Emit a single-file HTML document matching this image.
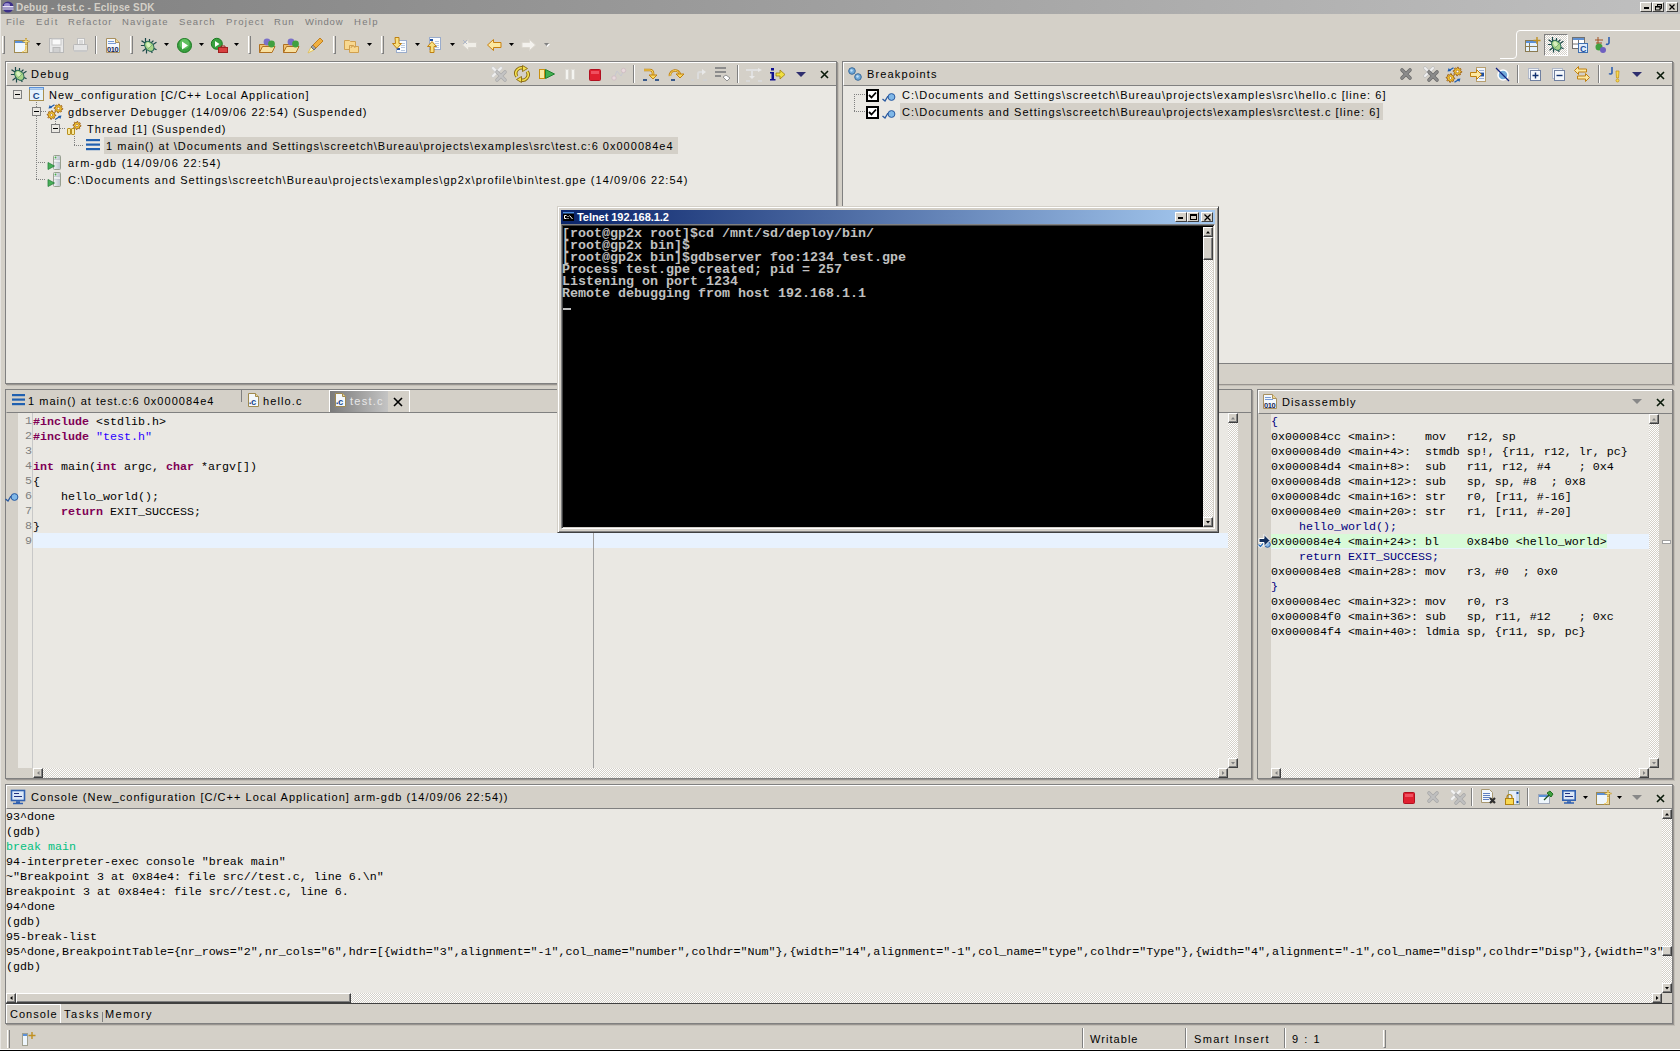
<!DOCTYPE html>
<html><head><meta charset="utf-8">
<style>
*{margin:0;padding:0;box-sizing:border-box}
html,body{width:1680px;height:1051px;overflow:hidden;background:#d4d0c8;position:relative;font-family:"Liberation Sans",sans-serif;font-size:11px;color:#000}
.a{position:absolute}
.t{position:absolute;white-space:pre;font-family:"Liberation Sans",sans-serif;font-size:11px;line-height:13px}
.m{position:absolute;white-space:pre;font-family:"Liberation Mono",monospace;font-size:11.667px;line-height:15px}
.tm{position:absolute;white-space:pre;font-family:"Liberation Mono",monospace;font-size:13.333px;font-weight:bold;line-height:12px;color:#c0c0c0}
.view{position:absolute;background:#eae8e3;border:1px solid #808080;box-shadow:1px 1px 0 #989490, 2px 2px 0 #c2beb6}
.hdr{position:absolute;left:0;right:0;top:0;height:24px;background:#d4d0c8;border-top:1px solid #fff;border-left:1px solid #fff;border-bottom:1px solid #808080}
.chk{background-color:#eae8e3;background-image:conic-gradient(#fff 25%,#d4d0c8 0 50%,#fff 0 75%,#d4d0c8 0);background-size:2px 2px}
.btn{position:absolute;width:10px;height:10px;background:#d4d0c8;border-top:1px solid #fff;border-left:1px solid #fff;border-right:1px solid #404040;border-bottom:1px solid #404040;box-shadow:inset -1px -1px 0 #808080}
.g{position:absolute;background:#d4d0c8}
svg{position:absolute;overflow:visible}
</style></head><body>

<!-- window edges -->
<div class="a" style="left:0;top:14px;width:1px;height:1037px;background:#e6e4e0"></div>
<div class="a" style="left:0;top:1049px;width:1680px;height:1px;background:#fff"></div>
<div class="a" style="left:0;top:1050px;width:1680px;height:1px;background:#000"></div>

<!-- title bar -->
<div class="a" style="left:1px;top:0;width:1679px;height:14px;background:linear-gradient(90deg,#808080,#c0c0c0)"></div>

<!-- perspective bar -->
<svg style="left:0;top:0" width="1680" height="62"><path d="M1500 58.5H1513Q1516.5 58.5 1516.5 55V34Q1516.5 30.5 1520 30.5H1680" fill="none" stroke="#fff"/></svg>

<!-- ===== Debug view ===== -->
<div class="view" style="left:5px;top:61px;width:832px;height:323px"><div class="hdr"></div></div>
<!-- selection row 4 -->
<div class="a" style="left:104px;top:137px;width:574px;height:17px;background:#d4d0c8"></div>

<!-- ===== Breakpoints view ===== -->
<div class="view" style="left:842px;top:61px;width:831px;height:323px"><div class="hdr"></div>
 <div class="a" style="left:0;top:301px;width:829px;height:21px;background:#d4d0c8;border-top:1px solid #808080"></div>
</div>
<div class="a" style="left:900px;top:103px;width:483px;height:17px;background:#d4d0c8"></div>

<!-- ===== Editor ===== -->
<div class="view" style="left:5px;top:389px;width:1247px;height:390px">
 <div class="hdr" style="height:23px;border-top-color:#d4d0c8;border-left-color:#d4d0c8"></div>
</div>
<!-- ruler and line-number column -->
<div class="g" style="left:6px;top:413px;width:12px;height:365px"></div>
<div class="g" style="left:18px;top:768px;width:15px;height:10px"></div>
<div class="a" style="left:32px;top:413px;width:1px;height:355px;background:#c8c8c8"></div>
<!-- current line -->
<div class="a" style="left:33px;top:533px;width:1195px;height:15px;background:#e8f2fe"></div>
<!-- print margin -->
<div class="a" style="left:593px;top:413px;width:1px;height:355px;background:#a0a0a0"></div>
<!-- scrollbars -->
<div class="a chk" style="left:1228px;top:413px;width:10px;height:355px"></div>
<div class="btn" style="left:1228px;top:413px"></div>
<div class="btn" style="left:1228px;top:758px"></div>
<div class="a chk" style="left:33px;top:768px;width:1195px;height:10px"></div>
<div class="btn" style="left:33px;top:768px"></div>
<div class="btn" style="left:1218px;top:768px"></div>
<div class="g" style="left:1228px;top:768px;width:10px;height:10px"></div>
<div class="g" style="left:1238px;top:413px;width:13px;height:365px"></div>
<!-- tab 3 selected -->
<div class="a" style="left:329px;top:390px;width:81px;height:22px;background:#d4d0c8;border-top:1px solid #fff;border-left:1px solid #fff;border-right:1px solid #fff"></div>
<div class="a" style="left:330px;top:391px;width:58px;height:21px;background:linear-gradient(90deg,#7a7a7a,#c4c4c4)"></div>
<div class="a" style="left:241px;top:390px;width:1px;height:12px;background:#808080"></div>

<!-- ===== Disassembly ===== -->
<div class="view" style="left:1257px;top:389px;width:416px;height:390px"><div class="hdr"></div></div>
<div class="g" style="left:1258px;top:414px;width:13px;height:364px"></div>
<div class="a" style="left:1271px;top:534px;width:336px;height:14px;background:#d8fad8"></div>
<div class="a" style="left:1271px;top:548px;width:378px;height:1px;background:#e8f2fe"></div>
<div class="a" style="left:1607px;top:534px;width:42px;height:15px;background:#e8f2fe"></div>
<div class="a chk" style="left:1649px;top:414px;width:10px;height:354px"></div>
<div class="btn" style="left:1649px;top:414px"></div>
<div class="btn" style="left:1649px;top:758px"></div>
<div class="a chk" style="left:1271px;top:768px;width:378px;height:10px"></div>
<div class="btn" style="left:1271px;top:768px"></div>
<div class="btn" style="left:1639px;top:768px"></div>
<div class="g" style="left:1649px;top:768px;width:10px;height:10px"></div>
<div class="g" style="left:1659px;top:414px;width:13px;height:364px"></div>
<div class="a" style="left:1662px;top:540px;width:9px;height:4px;background:#fff;border:1px solid #a0a0a0"></div>

<!-- ===== Console ===== -->
<div class="view" style="left:5px;top:784px;width:1668px;height:240px"><div class="hdr"></div></div>
<div class="a chk" style="left:1662px;top:809px;width:10px;height:184px"></div>
<div class="btn" style="left:1662px;top:809px"></div>
<div class="btn" style="left:1662px;top:946px"></div>
<div class="btn" style="left:1662px;top:983px"></div>
<div class="a chk" style="left:6px;top:993px;width:1656px;height:10px"></div>
<div class="btn" style="left:6px;top:993px"></div>
<div class="btn" style="left:16px;top:993px;width:335px"></div>
<div class="btn" style="left:1652px;top:993px"></div>
<div class="g" style="left:1662px;top:993px;width:10px;height:10px"></div>
<div class="g" style="left:6px;top:1003px;width:1666px;height:20px;border-top:1px solid #404040"></div>
<div class="a" style="left:6px;top:1004px;width:55px;height:19px;border-top:1px solid #fff;border-left:1px solid #fff;border-right:1px solid #fff"></div>
<div class="a" style="left:102px;top:1012px;width:1px;height:10px;background:#808080"></div>

<!-- ===== status bar ===== -->
<div class="a" style="left:7px;top:1030px;width:3px;height:18px;border-left:1px solid #fff;border-right:1px solid #808080"></div>
<div class="a" style="left:1082px;top:1028px;width:2px;height:20px;border-left:1px solid #808080;border-right:1px solid #fff"></div>
<div class="a" style="left:1185px;top:1028px;width:2px;height:20px;border-left:1px solid #808080;border-right:1px solid #fff"></div>
<div class="a" style="left:1284px;top:1028px;width:2px;height:20px;border-left:1px solid #808080;border-right:1px solid #fff"></div>
<div class="a" style="left:1383px;top:1030px;width:3px;height:18px;border-left:1px solid #fff;border-right:1px solid #808080;border-bottom:1px solid #808080"></div>

<div class="t" style="left:16px;top:2px;letter-spacing:0.170px;color:#d4d0c8;font-weight:bold;font-size:10px;line-height:12px;">Debug - test.c - Eclipse SDK</div>
<div class="t" style="left:6px;top:16px;letter-spacing:1.062px;color:#7c7c7c;font-weight:normal;font-size:9.5px;line-height:11px;">File</div>
<div class="t" style="left:36px;top:16px;letter-spacing:1.708px;color:#7c7c7c;font-weight:normal;font-size:9.5px;line-height:11px;">Edit</div>
<div class="t" style="left:68px;top:16px;letter-spacing:1.085px;color:#7c7c7c;font-weight:normal;font-size:9.5px;line-height:11px;">Refactor</div>
<div class="t" style="left:122px;top:16px;letter-spacing:1.143px;color:#7c7c7c;font-weight:normal;font-size:9.5px;line-height:11px;">Navigate</div>
<div class="t" style="left:179px;top:16px;letter-spacing:1.078px;color:#7c7c7c;font-weight:normal;font-size:9.5px;line-height:11px;">Search</div>
<div class="t" style="left:226px;top:16px;letter-spacing:1.320px;color:#7c7c7c;font-weight:normal;font-size:9.5px;line-height:11px;">Project</div>
<div class="t" style="left:274px;top:16px;letter-spacing:1.031px;color:#7c7c7c;font-weight:normal;font-size:9.5px;line-height:11px;">Run</div>
<div class="t" style="left:305px;top:16px;letter-spacing:0.741px;color:#7c7c7c;font-weight:normal;font-size:9.5px;line-height:11px;">Window</div>
<div class="t" style="left:354px;top:16px;letter-spacing:1.318px;color:#7c7c7c;font-weight:normal;font-size:9.5px;line-height:11px;">Help</div>
<div class="t" style="left:31px;top:68px;letter-spacing:1.270px;color:#000;font-weight:normal;">Debug</div>
<div class="t" style="left:49px;top:89px;letter-spacing:0.996px;color:#000;font-weight:normal;">New_configuration [C/C++ Local Application]</div>
<div class="t" style="left:68px;top:106px;letter-spacing:1.052px;color:#000;font-weight:normal;">gdbserver Debugger (14/09/06 22:54) (Suspended)</div>
<div class="t" style="left:87px;top:123px;letter-spacing:1.062px;color:#000;font-weight:normal;">Thread [1] (Suspended)</div>
<div class="t" style="left:106px;top:140px;letter-spacing:1.014px;color:#000;font-weight:normal;">1 main() at \Documents and Settings\screetch\Bureau\projects\examples\src\test.c:6 0x000084e4</div>
<div class="t" style="left:68px;top:157px;letter-spacing:1.207px;color:#000;font-weight:normal;">arm-gdb (14/09/06 22:54)</div>
<div class="t" style="left:68px;top:174px;letter-spacing:1.060px;color:#000;font-weight:normal;">C:\Documents and Settings\screetch\Bureau\projects\examples\gp2x\profile\bin\test.gpe (14/09/06 22:54)</div>
<div class="t" style="left:867px;top:68px;letter-spacing:1.141px;color:#000;font-weight:normal;">Breakpoints</div>
<div class="t" style="left:902px;top:89px;letter-spacing:1.046px;color:#000;font-weight:normal;">C:\Documents and Settings\screetch\Bureau\projects\examples\src\hello.c [line: 6]</div>
<div class="t" style="left:902px;top:106px;letter-spacing:1.052px;color:#000;font-weight:normal;">C:\Documents and Settings\screetch\Bureau\projects\examples\src\test.c [line: 6]</div>
<div class="t" style="left:28px;top:395px;letter-spacing:1.026px;color:#000;font-weight:normal;">1 main() at test.c:6 0x000084e4</div>
<div class="t" style="left:263px;top:395px;letter-spacing:1.117px;color:#000;font-weight:normal;">hello.c</div>
<div class="t" style="left:350px;top:395px;letter-spacing:1.241px;color:#e8e8e8;font-weight:normal;">test.c</div>
<div class="t" style="left:1282px;top:396px;letter-spacing:1.114px;color:#000;font-weight:normal;">Disassembly</div>
<div class="t" style="left:31px;top:791px;letter-spacing:1.042px;color:#000;font-weight:normal;">Console (New_configuration [C/C++ Local Application] arm-gdb (14/09/06 22:54))</div>
<div class="t" style="left:10px;top:1008px;letter-spacing:1.023px;color:#000;font-weight:normal;">Console</div>
<div class="t" style="left:64px;top:1008px;letter-spacing:1.594px;color:#000;font-weight:normal;">Tasks</div>
<div class="t" style="left:105px;top:1008px;letter-spacing:1.353px;color:#000;font-weight:normal;">Memory</div>
<div class="t" style="left:1090px;top:1033px;letter-spacing:1.049px;color:#000;font-weight:normal;">Writable</div>
<div class="t" style="left:1194px;top:1033px;letter-spacing:1.327px;color:#000;font-weight:normal;">Smart Insert</div>
<div class="t" style="left:1292px;top:1033px;letter-spacing:1.523px;color:#000;font-weight:normal;">9 : 1</div>
<div class="m" style="left:33px;top:415px"><span style="color:#7f0055;font-weight:bold;">#include</span><span style="color:#000;"> &lt;stdlib.h&gt;</span></div>
<div class="m" style="left:25px;top:414px;color:#808080">1</div>
<div class="m" style="left:33px;top:430px"><span style="color:#7f0055;font-weight:bold;">#include</span><span style="color:#000;"> </span><span style="color:#2a00ff;">"test.h"</span></div>
<div class="m" style="left:25px;top:429px;color:#808080">2</div>
<div class="m" style="left:33px;top:445px"></div>
<div class="m" style="left:25px;top:444px;color:#808080">3</div>
<div class="m" style="left:33px;top:460px"><span style="color:#7f0055;font-weight:bold;">int</span><span style="color:#000;"> main(</span><span style="color:#7f0055;font-weight:bold;">int</span><span style="color:#000;"> argc, </span><span style="color:#7f0055;font-weight:bold;">char</span><span style="color:#000;"> *argv[])</span></div>
<div class="m" style="left:25px;top:459px;color:#808080">4</div>
<div class="m" style="left:33px;top:475px"><span style="color:#000;">{</span></div>
<div class="m" style="left:25px;top:474px;color:#808080">5</div>
<div class="m" style="left:33px;top:490px"><span style="color:#000;">    hello_world();</span></div>
<div class="m" style="left:25px;top:489px;color:#808080">6</div>
<div class="m" style="left:33px;top:505px"><span style="color:#000;">    </span><span style="color:#7f0055;font-weight:bold;">return</span><span style="color:#000;"> EXIT_SUCCESS;</span></div>
<div class="m" style="left:25px;top:504px;color:#808080">7</div>
<div class="m" style="left:33px;top:520px"><span style="color:#000;">}</span></div>
<div class="m" style="left:25px;top:519px;color:#808080">8</div>
<div class="m" style="left:33px;top:535px"></div>
<div class="m" style="left:25px;top:534px;color:#808080">9</div>
<div class="m" style="left:1271px;top:415px"><span style="color:#00007f">{</span></div>
<div class="m" style="left:1271px;top:430px"><span style="color:#000">0x000084cc &lt;main&gt;:    mov   r12, sp</span></div>
<div class="m" style="left:1271px;top:445px"><span style="color:#000">0x000084d0 &lt;main+4&gt;:  stmdb sp!, {r11, r12, lr, pc}</span></div>
<div class="m" style="left:1271px;top:460px"><span style="color:#000">0x000084d4 &lt;main+8&gt;:  sub   r11, r12, #4    ; 0x4</span></div>
<div class="m" style="left:1271px;top:475px"><span style="color:#000">0x000084d8 &lt;main+12&gt;: sub   sp, sp, #8  ; 0x8</span></div>
<div class="m" style="left:1271px;top:490px"><span style="color:#000">0x000084dc &lt;main+16&gt;: str   r0, [r11, #-16]</span></div>
<div class="m" style="left:1271px;top:505px"><span style="color:#000">0x000084e0 &lt;main+20&gt;: str   r1, [r11, #-20]</span></div>
<div class="m" style="left:1271px;top:520px"><span style="color:#00007f">    hello_world();</span></div>
<div class="m" style="left:1271px;top:535px"><span style="color:#000">0x000084e4 &lt;main+24&gt;: bl    0x84b0 &lt;hello_world&gt;</span></div>
<div class="m" style="left:1271px;top:550px"><span style="color:#00007f">    return EXIT_SUCCESS;</span></div>
<div class="m" style="left:1271px;top:565px"><span style="color:#000">0x000084e8 &lt;main+28&gt;: mov   r3, #0  ; 0x0</span></div>
<div class="m" style="left:1271px;top:580px"><span style="color:#00007f">}</span></div>
<div class="m" style="left:1271px;top:595px"><span style="color:#000">0x000084ec &lt;main+32&gt;: mov   r0, r3</span></div>
<div class="m" style="left:1271px;top:610px"><span style="color:#000">0x000084f0 &lt;main+36&gt;: sub   sp, r11, #12    ; 0xc</span></div>
<div class="m" style="left:1271px;top:625px"><span style="color:#000">0x000084f4 &lt;main+40&gt;: ldmia sp, {r11, sp, pc}</span></div>
<div class="m" style="left:6px;top:810px;color:#000">93^done</div>
<div class="m" style="left:6px;top:825px;color:#000">(gdb)</div>
<div class="m" style="left:6px;top:840px;color:#00c080">break main</div>
<div class="m" style="left:6px;top:855px;color:#000">94-interpreter-exec console "break main"</div>
<div class="m" style="left:6px;top:870px;color:#000">~"Breakpoint 3 at 0x84e4: file src//test.c, line 6.\n"</div>
<div class="m" style="left:6px;top:885px;color:#000">Breakpoint 3 at 0x84e4: file src//test.c, line 6.</div>
<div class="m" style="left:6px;top:900px;color:#000">94^done</div>
<div class="m" style="left:6px;top:915px;color:#000">(gdb)</div>
<div class="m" style="left:6px;top:930px;color:#000">95-break-list</div>
<div class="m" style="left:6px;top:945px;color:#000">95^done,BreakpointTable={nr_rows="2",nr_cols="6",hdr=[{width="3",alignment="-1",col_name="number",colhdr="Num"},{width="14",alignment="-1",col_name="type",colhdr="Type"},{width="4",alignment="-1",col_name="disp",colhdr="Disp"},{width="3"</div>
<div class="m" style="left:6px;top:960px;color:#000">(gdb)</div>

<!-- ===== Telnet window ===== -->
<div class="a" style="left:557px;top:206px;width:662px;height:327px;background:#d4d0c8;border-top:1px solid #d4d0c8;border-left:1px solid #d4d0c8;border-right:1px solid #404040;border-bottom:1px solid #404040;box-shadow:inset 1px 1px 0 #fff, inset -1px -1px 0 #808080"></div>
<div class="a" style="left:561px;top:210px;width:654px;height:14px;background:linear-gradient(90deg,#0a246a,#a6caf0)"></div>
<div class="a" style="left:561px;top:224px;width:654px;height:305px;background:#000;border-top:1px solid #808080;border-left:1px solid #808080;border-right:1px solid #fff;border-bottom:1px solid #fff;box-shadow:inset 1px 1px 0 #404040, inset -1px -1px 0 #d4d0c8"></div>
<div class="a chk" style="left:1203px;top:227px;width:10px;height:300px"></div>
<div class="btn" style="left:1203px;top:227px"></div>
<div class="btn" style="left:1203px;top:237px;height:23px"></div>
<div class="btn" style="left:1203px;top:517px"></div>
<div class="a" style="left:563px;top:308px;width:8px;height:2px;background:#c0c0c0"></div>
<div class="t" style="left:577px;top:211px;color:#fff;font-weight:bold;letter-spacing:-0.05px">Telnet 192.168.1.2</div>
<div class="tm" style="left:562px;top:228px">[root@gp2x root]$cd /mnt/sd/deploy/bin/</div>
<div class="tm" style="left:562px;top:240px">[root@gp2x bin]$</div>
<div class="tm" style="left:562px;top:252px">[root@gp2x bin]$gdbserver foo:1234 test.gpe</div>
<div class="tm" style="left:562px;top:264px">Process test.gpe created; pid = 257</div>
<div class="tm" style="left:562px;top:276px">Listening on port 1234</div>
<div class="tm" style="left:562px;top:288px">Remote debugging from host 192.168.1.1</div>

<svg style="left:2px;top:1px" width="12" height="12" viewBox="0 0 12 12"><ellipse cx="6" cy="6" rx="5.5" ry="5.5" fill="#3c2f8a"/><ellipse cx="5" cy="4" rx="3" ry="2" fill="#9a8ed0"/><rect x="0.5" y="5" width="11" height="1.6" fill="#e8e4f4"/><rect x="0.5" y="7.4" width="11" height="1.2" fill="#e8e4f4"/></svg>
<div class="a" style="left:1640px;top:2px;width:12px;height:10px;background:#d4d0c8;border-top:1px solid #fff;border-left:1px solid #fff;border-right:1px solid #404040;border-bottom:1px solid #404040"></div>
<div class="a" style="left:1652px;top:2px;width:12px;height:10px;background:#d4d0c8;border-top:1px solid #fff;border-left:1px solid #fff;border-right:1px solid #404040;border-bottom:1px solid #404040"></div>
<div class="a" style="left:1666px;top:2px;width:12px;height:10px;background:#d4d0c8;border-top:1px solid #fff;border-left:1px solid #fff;border-right:1px solid #404040;border-bottom:1px solid #404040"></div>
<svg style="left:1644px;top:7px" width="6" height="3" viewBox="0 0 6 3"><rect x="0" y="0" width="5" height="2" fill="#000"/></svg>
<svg style="left:1655px;top:4px" width="8" height="8" viewBox="0 0 8 8"><path d="M2.5 2V0.5h4v4H5" fill="none" stroke="#000"/><rect x="0.5" y="2.5" width="4.5" height="3.5" fill="none" stroke="#000"/><rect x="0" y="2" width="5.5" height="1.5" fill="#000"/><rect x="2" y="0" width="5" height="1.2" fill="#000"/></svg>
<svg style="left:1669px;top:4px" width="7" height="7" viewBox="0 0 7 7"><path d="M0.5 0.5l5 5M5.5 0.5l-5 5" stroke="#000" stroke-width="1.2"/></svg>
<div class="a" style="left:2px;top:36px;width:3px;height:18px;border-left:1px solid #fff;border-right:1px solid #808080;border-bottom:1px solid #808080"></div>
<svg style="left:14px;top:38px" width="16" height="16" viewBox="0 0 16 16"><rect x="0.5" y="2.5" width="13" height="12" fill="#eef6fc" stroke="#a08a50"/><rect x="1" y="3" width="12" height="2" fill="#5a90d8"/><path d="M12 1.5v13M8 14c3 0 4-3 4-6" stroke="#f0c040" fill="none"/><path d="M12 0v7M8.5 3.5h7" stroke="#c09020" stroke-width="1.4"/><path d="M12 1v5M9.5 3.5h5" stroke="#fff0a0" stroke-width="0.8"/></svg>
<svg style="left:36px;top:43px" width="5" height="4" viewBox="0 0 5 4"><path d="M0 0h5l-2.5 3z" fill="#000"/></svg>
<svg style="left:49px;top:38px" width="16" height="16" viewBox="0 0 16 16"><rect x="0.5" y="0.5" width="14" height="14" fill="#e8e8e8" stroke="#b8b8b8"/><rect x="3" y="1" width="9" height="6" fill="#fafafa" stroke="#c8c8c8"/><rect x="4" y="9.5" width="7" height="5" fill="#d0d0d0" stroke="#b8b8b8"/></svg>
<svg style="left:73px;top:38px" width="16" height="16" viewBox="0 0 16 16"><rect x="4.5" y="0.5" width="7" height="6" fill="#f4f4f4" stroke="#c0c0c0"/><rect x="0.5" y="6.5" width="14" height="6" rx="1" fill="#e4e4e4" stroke="#b8b8b8"/><rect x="1" y="12" width="13" height="2" fill="#c8c8c8"/><path d="M6 3h4M6 5h4" stroke="#c0c0c0"/></svg>
<div class="a" style="left:95px;top:36px;width:2px;height:18px;border-left:1px solid #808080;border-right:1px solid #fff"></div>
<svg style="left:106px;top:38px" width="16" height="16" viewBox="0 0 16 16"><path d="M0.5 0.5h9l4 4v10h-13z" fill="#f4f8fc" stroke="#a89060"/><path d="M9.5 0.5v4h4" fill="#f0d890" stroke="#a89060"/><path d="M2 3.5h6M2 5.5h8" stroke="#6a90d0" stroke-width="0.9"/><text x="1" y="13.5" font-family="Liberation Sans" font-weight="bold" font-size="7.5" fill="#14285a" letter-spacing="-0.4">010</text></svg>
<div class="a" style="left:130px;top:36px;width:3px;height:18px;border-left:1px solid #fff;border-right:1px solid #808080;border-bottom:1px solid #808080"></div>
<svg style="left:141px;top:38px" width="16" height="16" viewBox="0 0 16 16"><g stroke="#1a4848" stroke-width="1.2" fill="none" stroke-linecap="square"><path d="M4.5 0.5v4M1 3l3 2M0.5 7.5h3.5M2 13l3-2.5M5.5 15v-3M8.5 1.5v2.5M12 3l-2 2M15 4.5l-3 2M15 11.5l-3-1.5M11 14.5l-1.5-2"/></g><ellipse cx="8.3" cy="8.3" rx="4" ry="5.6" transform="rotate(-40 8.3 8.3)" fill="#a8d488" stroke="#2a6a58"/><ellipse cx="7.5" cy="7" rx="1.8" ry="2.6" transform="rotate(-40 7.5 7)" fill="#d8f0c0"/><path d="M6 12l6-6" stroke="#70a870" stroke-width="0.8"/></svg>
<svg style="left:164px;top:43px" width="5" height="4" viewBox="0 0 5 4"><path d="M0 0h5l-2.5 3z" fill="#000"/></svg>
<svg style="left:177px;top:38px" width="16" height="16" viewBox="0 0 16 16"><circle cx="7.5" cy="7.5" r="7" fill="#3aa040" stroke="#1a7a20"/><circle cx="7.5" cy="6" r="5" fill="#60c060"/><path d="M5 3.5v8l6-4z" fill="#fff"/></svg>
<svg style="left:199px;top:43px" width="5" height="4" viewBox="0 0 5 4"><path d="M0 0h5l-2.5 3z" fill="#000"/></svg>
<svg style="left:211px;top:38px" width="17" height="16" viewBox="0 0 17 16"><circle cx="5.8" cy="5.8" r="5.5" fill="#3aa040" stroke="#1a7a20"/><path d="M4 3v6l4.5-3z" fill="#fff"/><rect x="7.5" y="9.5" width="9" height="5" fill="#d84040" stroke="#a02020"/><path d="M10 9.5v-1.5h4v1.5" fill="none" stroke="#a02020"/></svg>
<svg style="left:234px;top:43px" width="5" height="4" viewBox="0 0 5 4"><path d="M0 0h5l-2.5 3z" fill="#000"/></svg>
<div class="a" style="left:248px;top:36px;width:3px;height:18px;border-left:1px solid #fff;border-right:1px solid #808080;border-bottom:1px solid #808080"></div>
<svg style="left:259px;top:38px" width="17" height="16" viewBox="0 0 17 16"><path d="M0.5 6.5h10l1.5 1.5v6.5h-11.5z" fill="#f0c070" stroke="#b07020"/><path d="M0.5 14.5l3-6h12.5l-3 6z" fill="#f8e0a0" stroke="#b07020"/><circle cx="8" cy="4" r="3.4" fill="#7a70c8"/><circle cx="12.5" cy="6" r="3.4" fill="#40a040"/></svg>
<svg style="left:283px;top:38px" width="17" height="16" viewBox="0 0 17 16"><path d="M0.5 6.5h10l1.5 1.5v6.5h-11.5z" fill="#f0c070" stroke="#b07020"/><path d="M0.5 14.5l3-6h12.5l-3 6z" fill="#f8e0a0" stroke="#b07020"/><circle cx="8" cy="4" r="3.4" fill="#7a70c8"/><circle cx="12.5" cy="6" r="3.4" fill="#40a040"/></svg>
<svg style="left:307px;top:38px" width="17" height="16" viewBox="0 0 17 16"><path d="M1 15l3-6 3 3z" fill="#fff8c0" stroke="#e0c060"/><path d="M4 9l2-2 3 3-2 2z" fill="#a0a0a0" stroke="#707070"/><path d="M6 7l7-7 3 3-7 7z" fill="#f0b040" stroke="#c08020"/></svg>
<div class="a" style="left:333px;top:36px;width:3px;height:18px;border-left:1px solid #fff;border-right:1px solid #808080;border-bottom:1px solid #808080"></div>
<svg style="left:344px;top:38px" width="16" height="16" viewBox="0 0 16 16"><path d="M0.5 2.5h5l1 1h5v8h-11z" fill="#f8d890" stroke="#d0a050"/><path d="M5.5 7.5h4l1 1h4v6h-9z" fill="#f8d890" stroke="#d0a050"/><path d="M7 10a2 2 0 0 1 4 0" stroke="#d0a050" fill="none"/></svg>
<svg style="left:367px;top:43px" width="5" height="4" viewBox="0 0 5 4"><path d="M0 0h5l-2.5 3z" fill="#000"/></svg>
<div class="a" style="left:381px;top:36px;width:3px;height:18px;border-left:1px solid #fff;border-right:1px solid #808080;border-bottom:1px solid #808080"></div>
<svg style="left:392px;top:37px" width="16" height="16" viewBox="0 0 16 16"><rect x="4.5" y="3.5" width="10" height="12" fill="#fbfdff" stroke="#9aaccc"/><path d="M9 6.5h4M9 8.5h4M9 10.5h4M9 13.5h4" stroke="#b8c8e0"/><rect x="5" y="11" width="3" height="2" fill="#2050a0"/><path d="M3 0.5h4v6h2.5l-4.5 5-4.5-5h3z" fill="#f8e080" stroke="#c08010"/></svg>
<svg style="left:415px;top:43px" width="5" height="4" viewBox="0 0 5 4"><path d="M0 0h5l-2.5 3z" fill="#000"/></svg>
<svg style="left:427px;top:37px" width="16" height="16" viewBox="0 0 16 16"><rect x="2.5" y="0.5" width="11" height="12" fill="#fbfdff" stroke="#9aaccc"/><path d="M8 4.5h4M8 6.5h4M8 8.5h4M8 10.5h4" stroke="#b8c8e0"/><rect x="3" y="2" width="3" height="2" fill="#2050a0"/><path d="M3 15.5h4v-6h2.5l-4.5-5-4.5 5h3z" fill="#f8e080" stroke="#c08010"/></svg>
<svg style="left:450px;top:43px" width="5" height="4" viewBox="0 0 5 4"><path d="M0 0h5l-2.5 3z" fill="#000"/></svg>
<svg style="left:462px;top:39px" width="16" height="13" viewBox="0 0 16 13"><path d="M0.5 6l6-5.5v3h8v5h-8v3z" fill="#f0eee8" stroke="#d8d4cc"/><path d="M1 1l4 4M5 1l-4 4" stroke="#b0b8c8"/></svg>
<svg style="left:487px;top:39px" width="16" height="13" viewBox="0 0 16 13"><path d="M0.5 6l6-5.5v3h7.5v5h-7.5v3z" fill="#fce8a0" stroke="#c88010"/></svg>
<svg style="left:509px;top:43px" width="5" height="4" viewBox="0 0 5 4"><path d="M0 0h5l-2.5 3z" fill="#000"/></svg>
<svg style="left:522px;top:39px" width="16" height="13" viewBox="0 0 16 13"><path d="M13.5 6l-6-5.5v3h-7.5v5h7.5v3z" fill="#f4f2ee" stroke="#dcd8d0"/></svg>
<svg style="left:544px;top:43px" width="7" height="5" viewBox="0 0 7 5"><path d="M1 1h5l-2.5 3z" fill="#fff"/><path d="M0 0h5l-2.5 3z" fill="#808080"/></svg>
<svg style="left:1525px;top:37px" width="16" height="16" viewBox="0 0 16 16"><rect x="0.5" y="3.5" width="12" height="11" fill="#e4f2fc" stroke="#8a7a50"/><rect x="1" y="4" width="11" height="2" fill="#5a90d8"/><path d="M4.5 6v8M1 9.5h11" stroke="#8a7a50"/><path d="M12 0v7M8.5 3.5h7" stroke="#c09020" stroke-width="1.4"/></svg>
<div class="a chk" style="left:1544px;top:34px;width:24px;height:22px;border-top:1px solid #808080;border-left:1px solid #808080;border-right:1px solid #fff;border-bottom:1px solid #fff"></div>
<svg style="left:1548px;top:37px" width="16" height="16" viewBox="0 0 16 16"><g stroke="#1a4848" stroke-width="1.2" fill="none" stroke-linecap="square"><path d="M4.5 0.5v4M1 3l3 2M0.5 7.5h3.5M2 13l3-2.5M5.5 15v-3M8.5 1.5v2.5M12 3l-2 2M15 4.5l-3 2M15 11.5l-3-1.5M11 14.5l-1.5-2"/></g><ellipse cx="8.3" cy="8.3" rx="4" ry="5.6" transform="rotate(-40 8.3 8.3)" fill="#a8d488" stroke="#2a6a58"/><ellipse cx="7.5" cy="7" rx="1.8" ry="2.6" transform="rotate(-40 7.5 7)" fill="#d8f0c0"/><path d="M6 12l6-6" stroke="#70a870" stroke-width="0.8"/></svg>
<svg style="left:1572px;top:37px" width="16" height="16" viewBox="0 0 16 16"><rect x="0.5" y="0.5" width="12" height="11" fill="#fff" stroke="#707070"/><rect x="1" y="1" width="11" height="2" fill="#6090d0"/><path d="M6.5 3v8M1 7h11" stroke="#707070"/><rect x="6.5" y="6.5" width="9" height="9" fill="#e0ecfa" stroke="#4070b0"/><text x="8" y="14.5" font-family="Liberation Sans" font-weight="bold" font-size="9" fill="#2050a0">C</text></svg>
<svg style="left:1595px;top:37px" width="17" height="16" viewBox="0 0 17 16"><path d="M3 0v7M0 3h8M1 6h6" stroke="#a05020" fill="none"/><circle cx="4" cy="10" r="3.5" fill="#40a040"/><circle cx="8" cy="13" r="3" fill="#7060c0"/><path d="M14 0v6a2 2 0 0 1-3 1" stroke="#3060b0" stroke-width="1.6" fill="none"/></svg>
<svg style="left:11px;top:67px" width="16" height="16" viewBox="0 0 16 16"><g stroke="#1a4848" stroke-width="1.2" fill="none" stroke-linecap="square"><path d="M4.5 0.5v4M1 3l3 2M0.5 7.5h3.5M2 13l3-2.5M5.5 15v-3M8.5 1.5v2.5M12 3l-2 2M15 4.5l-3 2M15 11.5l-3-1.5M11 14.5l-1.5-2"/></g><ellipse cx="8.3" cy="8.3" rx="4" ry="5.6" transform="rotate(-40 8.3 8.3)" fill="#a8d488" stroke="#2a6a58"/><ellipse cx="7.5" cy="7" rx="1.8" ry="2.6" transform="rotate(-40 7.5 7)" fill="#d8f0c0"/><path d="M6 12l6-6" stroke="#70a870" stroke-width="0.8"/></svg>
<svg style="left:491px;top:66px" width="16" height="16" viewBox="0 0 16 16"><path d="M2 2l8 8M10 2l-8 8" stroke="#d0d0d0" stroke-width="3.6" stroke-linecap="round"/><path d="M2 2l8 8M10 2l-8 8" stroke="#f0f0f0" stroke-width="2" stroke-linecap="round"/><g transform="translate(4,4)"><path d="M2 2l8 8M10 2l-8 8" stroke="#acacac" stroke-width="3.6" stroke-linecap="round"/><path d="M2 2l8 8M10 2l-8 8" stroke="#c4c4c4" stroke-width="2" stroke-linecap="round"/></g></svg>
<svg style="left:514px;top:66px" width="17" height="17" viewBox="0 0 17 17"><g fill="none" stroke-linecap="butt"><path d="M2.8 10.5A5.5 5.5 0 0 1 10 2.6" stroke="#8a6a10" stroke-width="3.4"/><path d="M13.2 5.5A5.5 5.5 0 0 1 6 13.4" stroke="#8a6a10" stroke-width="3.4"/><path d="M2.8 10.5A5.5 5.5 0 0 1 10 2.6" stroke="#f4e050" stroke-width="1.6"/><path d="M13.2 5.5A5.5 5.5 0 0 1 6 13.4" stroke="#f4e050" stroke-width="1.6"/></g><path d="M8.5 -0.5l5 3-5 3z" fill="#f4e050" stroke="#8a6a10" stroke-width="0.9"/><path d="M7.5 16.5l-5-3 5-3z" fill="#f4e050" stroke="#8a6a10" stroke-width="0.9"/></svg>
<svg style="left:539px;top:69px" width="16" height="11" viewBox="0 0 16 11"><rect x="0.5" y="0.5" width="5" height="9" fill="#f8e8a0" stroke="#c89010"/><path d="M6.5 0.5v9l9-4.5z" fill="#40b050" stroke="#208030"/></svg>
<svg style="left:565px;top:69px" width="11" height="12" viewBox="0 0 11 12"><rect x="0.5" y="0.5" width="3" height="10" fill="#f4f4f0" stroke="#dcdad4"/><rect x="6.5" y="0.5" width="3" height="10" fill="#f4f4f0" stroke="#dcdad4"/></svg>
<svg style="left:589px;top:69px" width="12" height="12" viewBox="0 0 12 12"><rect x="0.5" y="0.5" width="11" height="11" rx="1" fill="#e02030" stroke="#b01020"/><rect x="2" y="2" width="8" height="3" fill="#f05060"/></svg>
<svg style="left:611px;top:68px" width="16" height="13" viewBox="0 0 16 13"><path d="M3 10L6 3l4 5 3-6" stroke="#c8c8d0" fill="none"/><circle cx="3" cy="10" r="2.2" fill="#e8d8dc" stroke="#d0c0c4"/><circle cx="12.5" cy="2.5" r="2.2" fill="#e8d8dc" stroke="#d0c0c4"/></svg>
<div class="a" style="left:633px;top:65px;width:2px;height:18px;border-left:1px solid #808080;border-right:1px solid #fff"></div>
<svg style="left:643px;top:68px" width="16" height="14" viewBox="0 0 16 14"><path d="M1 2h6a3 3 0 0 1 3 3v3" stroke="#c08010" stroke-width="2.6" fill="none"/><path d="M1 2h6a3 3 0 0 1 3 3v3" stroke="#f8d860" stroke-width="1" fill="none"/><path d="M6 7h8l-4 4z" fill="#f8d860" stroke="#c08010"/><rect x="0" y="11" width="4" height="2" fill="#3a5a8a"/><rect x="12" y="11" width="4" height="2" fill="#3a5a8a"/></svg>
<svg style="left:667px;top:68px" width="17" height="14" viewBox="0 0 17 14"><path d="M3 8a5 5 0 0 1 10 -1" stroke="#c08010" stroke-width="2.6" fill="none"/><path d="M3 8a5 5 0 0 1 10 -1" stroke="#f8d860" stroke-width="1" fill="none"/><path d="M9 6h8l-4 4z" fill="#f8d860" stroke="#c08010"/><rect x="4" y="11" width="4" height="2" fill="#3a5a8a"/></svg>
<svg style="left:691px;top:68px" width="16" height="14" viewBox="0 0 16 14"><path d="M7 11V6a2 2 0 0 1 2-2h3" stroke="#dcdcdc" stroke-width="2" fill="none"/><path d="M11 1l4 3-4 3z" fill="#e8e8e8"/><rect x="0" y="11" width="3" height="2" fill="#d0d0d0"/><rect x="12" y="11" width="4" height="2" fill="#d0d0d0"/></svg>
<svg style="left:715px;top:67px" width="16" height="16" viewBox="0 0 16 16"><path d="M0 1h11M0 5h11M0 9h6" stroke="#8c8c8c" stroke-width="2"/><path d="M8 10l3-2 4 3-3 3z" fill="#fff" stroke="#909090"/></svg>
<div class="a" style="left:737px;top:65px;width:2px;height:18px;border-left:1px solid #808080;border-right:1px solid #fff"></div>
<svg style="left:746px;top:68px" width="16" height="14" viewBox="0 0 16 14"><path d="M0 2h12M6 2v8" stroke="#e0e0e0" stroke-width="2"/><path d="M12 0l4 2-4 2z" fill="#e8e8e8"/><path d="M3 8h6l-3 3z" fill="#e8e8e8"/><rect x="0" y="12" width="4" height="2" fill="#d8d8d8"/><rect x="12" y="12" width="4" height="2" fill="#d8d8d8"/></svg>
<svg style="left:770px;top:68px" width="16" height="13" viewBox="0 0 16 13"><rect x="1" y="0" width="3" height="2.5" fill="#101090"/><path d="M0 4h4v7h1.5v1.5h-5.5v-1.5h1.5v-5.5h-1.5z" fill="#101090"/><path d="M6 5h4v-3l5 4.5-5 4.5v-3h-4z" fill="#f0e040" stroke="#a08010" stroke-width="0.8"/></svg>
<svg style="left:796px;top:72px" width="10" height="6" viewBox="0 0 10 6"><path d="M0 0h10l-5 5z" fill="#2e2e6e"/></svg>
<svg style="left:820px;top:70px" width="9" height="9" viewBox="0 0 9 9"><path d="M1 1l7 7M8 1l-7 7" stroke="#0a1a0a" stroke-width="1.6"/></svg>
<div class="a" style="left:36px;top:102px;width:1px;height:78px;background:repeating-linear-gradient(180deg,#808080 0 1px,transparent 1px 2px)"></div>
<div class="a" style="left:36px;top:179px;width:10px;height:1px;background:repeating-linear-gradient(90deg,#808080 0 1px,transparent 1px 2px)"></div>
<div class="a" style="left:36px;top:162px;width:10px;height:1px;background:repeating-linear-gradient(90deg,#808080 0 1px,transparent 1px 2px)"></div>
<div class="a" style="left:55px;top:119px;width:1px;height:10px;background:repeating-linear-gradient(180deg,#808080 0 1px,transparent 1px 2px)"></div>
<div class="a" style="left:60px;top:128px;width:6px;height:1px;background:repeating-linear-gradient(90deg,#808080 0 1px,transparent 1px 2px)"></div>
<div class="a" style="left:74px;top:136px;width:1px;height:10px;background:repeating-linear-gradient(180deg,#808080 0 1px,transparent 1px 2px)"></div>
<div class="a" style="left:74px;top:145px;width:10px;height:1px;background:repeating-linear-gradient(90deg,#808080 0 1px,transparent 1px 2px)"></div>
<div class="a" style="left:41px;top:111px;width:5px;height:1px;background:repeating-linear-gradient(90deg,#808080 0 1px,transparent 1px 2px)"></div>
<div class="a" style="left:13px;top:90px;width:9px;height:9px;border:1px solid #808080;background:#eae8e3"></div><div class="a" style="left:15px;top:94px;width:5px;height:1px;background:#000"></div>
<div class="a" style="left:32px;top:107px;width:9px;height:9px;border:1px solid #808080;background:#eae8e3"></div><div class="a" style="left:34px;top:111px;width:5px;height:1px;background:#000"></div>
<div class="a" style="left:51px;top:124px;width:9px;height:9px;border:1px solid #808080;background:#eae8e3"></div><div class="a" style="left:53px;top:128px;width:5px;height:1px;background:#000"></div>
<svg style="left:29px;top:87px" width="16" height="16" viewBox="0 0 16 16"><rect x="0.5" y="0.5" width="14" height="13" fill="#e4f2fc" stroke="#a89050"/><rect x="0" y="0" width="15" height="2.5" fill="#5a90d8"/><rect x="1" y="1" width="13" height="0.8" fill="#c8e0f8"/><text x="3.8" y="11.5" font-family="Liberation Sans" font-weight="bold" font-size="9.5" fill="#1a4a8a">C</text></svg>
<svg style="left:47px;top:104px" width="16" height="16" viewBox="0 0 16 16"><g fill="#f4c830" stroke="#9a5a10" stroke-width="0.9"><path d="M8.80 11.00 L8.72 11.84 L7.27 12.15 L6.99 12.67 L7.54 14.04 L6.89 14.58 L5.65 13.77 L5.09 13.94 L4.50 15.30 L3.66 15.22 L3.35 13.77 L2.83 13.49 L1.46 14.04 L0.92 13.39 L1.73 12.15 L1.56 11.59 L0.20 11.00 L0.28 10.16 L1.73 9.85 L2.01 9.33 L1.46 7.96 L2.11 7.42 L3.35 8.23 L3.91 8.06 L4.50 6.70 L5.34 6.78 L5.65 8.23 L6.17 8.51 L7.54 7.96 L8.08 8.61 L7.27 9.85 L7.44 10.41Z"/><path d="M15.80 4.50 L15.72 5.34 L14.27 5.65 L13.99 6.17 L14.54 7.54 L13.89 8.08 L12.65 7.27 L12.09 7.44 L11.50 8.80 L10.66 8.72 L10.35 7.27 L9.83 6.99 L8.46 7.54 L7.92 6.89 L8.73 5.65 L8.56 5.09 L7.20 4.50 L7.28 3.66 L8.73 3.35 L9.01 2.83 L8.46 1.46 L9.11 0.92 L10.35 1.73 L10.91 1.56 L11.50 0.20 L12.34 0.28 L12.65 1.73 L13.17 2.01 L14.54 1.46 L15.08 2.11 L14.27 3.35 L14.44 3.91Z"/></g><circle cx="4.5" cy="11" r="1.3" fill="#fff" stroke="#9a5a10" stroke-width="0.6"/><circle cx="11.5" cy="4.5" r="1.3" fill="#fff" stroke="#9a5a10" stroke-width="0.6"/><path d="M7.5 0.8L3.5 3.2M8.5 15.2l4-2.4" stroke="#1a5ab0" stroke-width="1.3" fill="none"/><path d="M1.5 4.5l1.2-3.6 2.4 3z" fill="#1a5ab0"/><path d="M14.5 11.5l-1.2 3.6-2.4-3z" fill="#1a5ab0"/></svg>
<svg style="left:66px;top:121px" width="16" height="15" viewBox="0 0 16 15"><rect x="1.5" y="7.5" width="3" height="6" rx="0.5" fill="#f8e8a0" stroke="#b89020"/><rect x="5.5" y="7.5" width="3" height="6" rx="0.5" fill="#f8e8a0" stroke="#b89020"/><path d="M15.00 4.50 L14.92 5.28 L13.59 5.57 L13.33 6.06 L13.83 7.33 L13.22 7.83 L12.07 7.09 L11.55 7.25 L11.00 8.50 L10.22 8.42 L9.93 7.09 L9.44 6.83 L8.17 7.33 L7.67 6.72 L8.41 5.57 L8.25 5.05 L7.00 4.50 L7.08 3.72 L8.41 3.43 L8.67 2.94 L8.17 1.67 L8.78 1.17 L9.93 1.91 L10.45 1.75 L11.00 0.50 L11.78 0.58 L12.07 1.91 L12.56 2.17 L13.83 1.67 L14.33 2.28 L13.59 3.43 L13.75 3.95Z" fill="#f4c830" stroke="#9a5a10" stroke-width="0.9"/><circle cx="11" cy="4.5" r="1.2" fill="#fff" stroke="#9a5a10" stroke-width="0.6"/></svg>
<svg style="left:86px;top:139px" width="14" height="12" viewBox="0 0 14 12"><rect x="0" y="0" width="14" height="2.2" fill="#2060b0"/><rect x="0" y="4.5" width="14" height="2.2" fill="#2060b0"/><rect x="0" y="9" width="14" height="2.2" fill="#2060b0"/></svg>
<svg style="left:47px;top:155px" width="16" height="16" viewBox="0 0 16 16"><defs><linearGradient id="pg" x1="0" x2="1"><stop offset="0" stop-color="#f0f2f4"/><stop offset="1" stop-color="#b8c0cc"/></linearGradient></defs><rect x="6.5" y="0.5" width="7" height="14" rx="1" fill="url(#pg)" stroke="#98a090"/><path d="M7 5h6M7 6.5h6" stroke="#fff"/><path d="M7 4.5h6M7 7h6" stroke="#a0a8b0" stroke-width="0.5"/><circle cx="8.5" cy="2.5" r="0.9" fill="#40b040"/><path d="M1 7.5v7l6.5-3.5z" fill="#48b058" stroke="#288040" stroke-width="0.8"/></svg>
<svg style="left:47px;top:172px" width="16" height="16" viewBox="0 0 16 16"><defs><linearGradient id="pg" x1="0" x2="1"><stop offset="0" stop-color="#f0f2f4"/><stop offset="1" stop-color="#b8c0cc"/></linearGradient></defs><rect x="6.5" y="0.5" width="7" height="14" rx="1" fill="url(#pg)" stroke="#98a090"/><path d="M7 5h6M7 6.5h6" stroke="#fff"/><path d="M7 4.5h6M7 7h6" stroke="#a0a8b0" stroke-width="0.5"/><circle cx="8.5" cy="2.5" r="0.9" fill="#40b040"/><path d="M1 7.5v7l6.5-3.5z" fill="#48b058" stroke="#288040" stroke-width="0.8"/></svg>
<svg style="left:848px;top:67px" width="15" height="15" viewBox="0 0 15 15"><circle cx="4" cy="4" r="3.3" fill="#70a8d8" stroke="#3a6a9a"/><circle cx="10" cy="10" r="3.3" fill="#70a8d8" stroke="#3a6a9a"/><circle cx="3.5" cy="3.5" r="1.2" fill="#c0e0f8"/><circle cx="9.5" cy="9.5" r="1.2" fill="#c0e0f8"/></svg>
<div class="a" style="left:854px;top:94px;width:1px;height:18px;background:repeating-linear-gradient(180deg,#808080 0 1px,transparent 1px 2px)"></div>
<div class="a" style="left:854px;top:94px;width:11px;height:1px;background:repeating-linear-gradient(90deg,#808080 0 1px,transparent 1px 2px)"></div>
<div class="a" style="left:854px;top:111px;width:11px;height:1px;background:repeating-linear-gradient(90deg,#808080 0 1px,transparent 1px 2px)"></div>
<svg style="left:866px;top:89px" width="13" height="13" viewBox="0 0 13 13"><rect x="1" y="1" width="11" height="11" fill="#fff" stroke="#000" stroke-width="2"/><path d="M3 6l2.5 2.5 4.5-5" stroke="#000" stroke-width="1.8" fill="none"/></svg>
<svg style="left:882px;top:92px" width="14" height="10" viewBox="0 0 14 10"><path d="M0.5 7l2.5 2 3-5" stroke="#2a5aa0" stroke-width="1.4" fill="none"/><circle cx="9.5" cy="5" r="3.4" fill="#80b8e8" stroke="#2a5aa0"/></svg>
<svg style="left:866px;top:106px" width="13" height="13" viewBox="0 0 13 13"><rect x="1" y="1" width="11" height="11" fill="#fff" stroke="#000" stroke-width="2"/><path d="M3 6l2.5 2.5 4.5-5" stroke="#000" stroke-width="1.8" fill="none"/></svg>
<svg style="left:882px;top:109px" width="14" height="10" viewBox="0 0 14 10"><path d="M0.5 7l2.5 2 3-5" stroke="#2a5aa0" stroke-width="1.4" fill="none"/><circle cx="9.5" cy="5" r="3.4" fill="#80b8e8" stroke="#2a5aa0"/></svg>
<svg style="left:1400px;top:68px" width="13" height="13" viewBox="0 0 13 13"><path d="M2 2l8 8M10 2l-8 8" stroke="#6a6a6a" stroke-width="3.6" stroke-linecap="round"/><path d="M2 2l8 8M10 2l-8 8" stroke="#8c8c8c" stroke-width="2" stroke-linecap="round"/></svg>
<svg style="left:1423px;top:66px" width="16" height="16" viewBox="0 0 16 16"><path d="M2 2l8 8M10 2l-8 8" stroke="#c0c0c0" stroke-width="3.6" stroke-linecap="round"/><path d="M2 2l8 8M10 2l-8 8" stroke="#f0f0f0" stroke-width="2" stroke-linecap="round"/><g transform="translate(4,4)"><path d="M2 2l8 8M10 2l-8 8" stroke="#6a6a6a" stroke-width="3.6" stroke-linecap="round"/><path d="M2 2l8 8M10 2l-8 8" stroke="#8c8c8c" stroke-width="2" stroke-linecap="round"/></g></svg>
<svg style="left:1446px;top:67px" width="16" height="16" viewBox="0 0 16 16"><g fill="#f4c830" stroke="#9a5a10" stroke-width="0.9"><path d="M8.80 11.00 L8.72 11.84 L7.27 12.15 L6.99 12.67 L7.54 14.04 L6.89 14.58 L5.65 13.77 L5.09 13.94 L4.50 15.30 L3.66 15.22 L3.35 13.77 L2.83 13.49 L1.46 14.04 L0.92 13.39 L1.73 12.15 L1.56 11.59 L0.20 11.00 L0.28 10.16 L1.73 9.85 L2.01 9.33 L1.46 7.96 L2.11 7.42 L3.35 8.23 L3.91 8.06 L4.50 6.70 L5.34 6.78 L5.65 8.23 L6.17 8.51 L7.54 7.96 L8.08 8.61 L7.27 9.85 L7.44 10.41Z"/><path d="M15.80 4.50 L15.72 5.34 L14.27 5.65 L13.99 6.17 L14.54 7.54 L13.89 8.08 L12.65 7.27 L12.09 7.44 L11.50 8.80 L10.66 8.72 L10.35 7.27 L9.83 6.99 L8.46 7.54 L7.92 6.89 L8.73 5.65 L8.56 5.09 L7.20 4.50 L7.28 3.66 L8.73 3.35 L9.01 2.83 L8.46 1.46 L9.11 0.92 L10.35 1.73 L10.91 1.56 L11.50 0.20 L12.34 0.28 L12.65 1.73 L13.17 2.01 L14.54 1.46 L15.08 2.11 L14.27 3.35 L14.44 3.91Z"/></g><circle cx="4.5" cy="11" r="1.3" fill="#fff" stroke="#9a5a10" stroke-width="0.6"/><circle cx="11.5" cy="4.5" r="1.3" fill="#fff" stroke="#9a5a10" stroke-width="0.6"/><path d="M7.5 0.8L3.5 3.2M8.5 15.2l4-2.4" stroke="#1a5ab0" stroke-width="1.3" fill="none"/><path d="M1.5 4.5l1.2-3.6 2.4 3z" fill="#1a5ab0"/><path d="M14.5 11.5l-1.2 3.6-2.4-3z" fill="#1a5ab0"/></svg>
<svg style="left:1470px;top:67px" width="16" height="16" viewBox="0 0 16 16"><rect x="6.5" y="0.5" width="9" height="14" fill="#eef4fc" stroke="#b8a070"/><path d="M9 3.5h5M9 5.5h5M9 9.5h5M9 11.5h5" stroke="#9ab0d8"/><rect x="11" y="6" width="3" height="3" fill="#2050a0"/><path d="M0.5 5.5h6v-3l5 5-5 5v-3h-6z" fill="#fce8a0" stroke="#c08010"/></svg>
<svg style="left:1496px;top:68px" width="14" height="14" viewBox="0 0 14 14"><circle cx="7" cy="7" r="5" fill="#70a8d8" stroke="#fff" stroke-width="1.5"/><path d="M0 0l13 13" stroke="#102080" stroke-width="1.3"/></svg>
<div class="a" style="left:1517px;top:65px;width:2px;height:18px;border-left:1px solid #808080;border-right:1px solid #fff"></div>
<svg style="left:1528px;top:68px" width="14" height="14" viewBox="0 0 14 14"><rect x="0.5" y="0.5" width="10" height="10" fill="#f0f4fa" stroke="#b0b8c8"/><rect x="2.5" y="2.5" width="10" height="10" fill="#f4f8fc" stroke="#7080a0"/><path d="M4.5 7.5h6M7.5 4.5v6" stroke="#103070" stroke-width="1.4"/></svg>
<svg style="left:1552px;top:68px" width="14" height="14" viewBox="0 0 14 14"><rect x="0.5" y="0.5" width="10" height="10" fill="#f0f4fa" stroke="#b0b8c8"/><rect x="2.5" y="2.5" width="10" height="10" fill="#f4f8fc" stroke="#7080a0"/><path d="M4.5 7.5h6" stroke="#103070" stroke-width="1.4"/></svg>
<svg style="left:1574px;top:66px" width="16" height="16" viewBox="0 0 16 16"><path d="M0.5 4.5l4-4v2.5h8v3h-8v2.5z" fill="#fce8a0" stroke="#c08010"/><path d="M15.5 11.5l-4-4v2.5h-8v3h8v2.5z" fill="#fce8a0" stroke="#c08010"/></svg>
<div class="a" style="left:1598px;top:65px;width:2px;height:18px;border-left:1px solid #808080;border-right:1px solid #fff"></div>
<svg style="left:1609px;top:67px" width="12" height="16" viewBox="0 0 12 16"><path d="M3 0v6a2 2 0 0 1-3 0.5" stroke="#3060b0" stroke-width="1.6" fill="none"/><path d="M7 4h3l-0.5 7h-2z" fill="#f8d850" stroke="#c09010" stroke-width="0.7"/><circle cx="8.5" cy="13.5" r="1.5" fill="#f8d850" stroke="#c09010" stroke-width="0.7"/></svg>
<svg style="left:1632px;top:72px" width="10" height="6" viewBox="0 0 10 6"><path d="M0 0h10l-5 5z" fill="#2e2e6e"/></svg>
<svg style="left:1656px;top:71px" width="9" height="9" viewBox="0 0 9 9"><path d="M1 1l7 7M8 1l-7 7" stroke="#0a1a0a" stroke-width="1.6"/></svg>
<svg style="left:12px;top:394px" width="14" height="12" viewBox="0 0 14 12"><rect x="0" y="0" width="13" height="2.2" fill="#2060b0"/><rect x="0" y="4.5" width="13" height="2.2" fill="#2060b0"/><rect x="0" y="9" width="13" height="2.2" fill="#2060b0"/></svg>
<svg style="left:248px;top:393px" width="12" height="16" viewBox="0 0 12 16"><path d="M0.5 0.5h7l3 3v10h-10z" fill="#f4f8fc" stroke="#a08a50"/><path d="M7.5 0.5v3h3" fill="#f0d890" stroke="#a08a50"/><rect x="1.5" y="9.5" width="1.4" height="1.6" fill="#2050a0"/><text x="3" y="11.5" font-family="Liberation Sans" font-weight="bold" font-size="9.5" fill="#1a4a90">c</text></svg>
<svg style="left:335px;top:393px" width="12" height="16" viewBox="0 0 12 16"><path d="M0.5 0.5h7l3 3v10h-10z" fill="#f4f8fc" stroke="#a08a50"/><path d="M7.5 0.5v3h3" fill="#f0d890" stroke="#a08a50"/><rect x="1.5" y="9.5" width="1.4" height="1.6" fill="#2050a0"/><text x="3" y="11.5" font-family="Liberation Sans" font-weight="bold" font-size="9.5" fill="#1a4a90">c</text></svg>
<svg style="left:393px;top:397px" width="10" height="10" viewBox="0 0 10 10"><path d="M1 1l8 8M9 1l-8 8" stroke="#000" stroke-width="1.6"/></svg>
<svg style="left:5px;top:492px" width="14" height="10" viewBox="0 0 14 10"><path d="M0.5 7l2.5 2 3-5" stroke="#2a5aa0" stroke-width="1.4" fill="none"/><circle cx="9.5" cy="5" r="3.4" fill="#80b8e8" stroke="#2a5aa0"/></svg>
<svg style="left:1263px;top:394px" width="16" height="16" viewBox="0 0 16 16"><path d="M0.5 0.5h9l4 4v10h-13z" fill="#f4f8fc" stroke="#a89060"/><path d="M9.5 0.5v4h4" fill="#f0d890" stroke="#a89060"/><path d="M2 3.5h6M2 5.5h8" stroke="#6a90d0" stroke-width="0.9"/><text x="1" y="13.5" font-family="Liberation Sans" font-weight="bold" font-size="7.5" fill="#14285a" letter-spacing="-0.4">010</text></svg>
<svg style="left:1632px;top:399px" width="10" height="6" viewBox="0 0 10 6"><path d="M0 0h10l-5 5z" fill="#888888"/></svg>
<svg style="left:1656px;top:398px" width="9" height="9" viewBox="0 0 9 9"><path d="M1 1l7 7M8 1l-7 7" stroke="#0a1a0a" stroke-width="1.6"/></svg>
<svg style="left:1257px;top:534px" width="15" height="15" viewBox="0 0 15 15"><path d="M1.5 10.5l2 2 2.5-3" stroke="#fff" stroke-width="2.6" fill="none"/><path d="M1.5 10.5l2 2 2.5-3" stroke="#2a6ab0" stroke-width="1.2" fill="none"/><circle cx="10.5" cy="10.5" r="2.8" fill="#88b8e8" stroke="#2a5a9a" stroke-width="1"/><path d="M2 4.5h5v-4l6 6-6 6v-4h-5z" fill="#14305e" stroke="#fff" stroke-width="1"/></svg>
<svg style="left:11px;top:790px" width="14" height="14" viewBox="0 0 14 14"><rect x="0.5" y="0.5" width="13" height="10" fill="#dce8f8" stroke="#3060b0" stroke-width="1.6"/><path d="M3 3.5h5M3 6.5h8" stroke="#203080"/><path d="M5 12h4M2 13.5h10" stroke="#3060b0" stroke-width="1.4"/></svg>
<svg style="left:1403px;top:792px" width="12" height="12" viewBox="0 0 12 12"><rect x="0.5" y="0.5" width="11" height="11" rx="1" fill="#e02030" stroke="#b01020"/><rect x="2" y="2" width="8" height="3" fill="#f05060"/></svg>
<svg style="left:1427px;top:791px" width="13" height="13" viewBox="0 0 13 13"><path d="M2 2l8 8M10 2l-8 8" stroke="#a8a8a8" stroke-width="3.6" stroke-linecap="round"/><path d="M2 2l8 8M10 2l-8 8" stroke="#c0c0c0" stroke-width="2" stroke-linecap="round"/></svg>
<svg style="left:1450px;top:789px" width="16" height="16" viewBox="0 0 16 16"><path d="M2 2l8 8M10 2l-8 8" stroke="#d0d0d0" stroke-width="3.6" stroke-linecap="round"/><path d="M2 2l8 8M10 2l-8 8" stroke="#f4f4f4" stroke-width="2" stroke-linecap="round"/><g transform="translate(4,4)"><path d="M2 2l8 8M10 2l-8 8" stroke="#a8a8a8" stroke-width="3.6" stroke-linecap="round"/><path d="M2 2l8 8M10 2l-8 8" stroke="#c0c0c0" stroke-width="2" stroke-linecap="round"/></g></svg>
<div class="a" style="left:1471px;top:788px;width:2px;height:18px;border-left:1px solid #808080;border-right:1px solid #fff"></div>
<svg style="left:1481px;top:789px" width="16" height="16" viewBox="0 0 16 16"><path d="M0.5 0.5h8l3 3v10h-11z" fill="#f4f8fc" stroke="#a89870"/><path d="M2 4.5h7M2 6.5h7M2 8.5h7M2 10.5h6" stroke="#6080c0"/><path d="M9 9l5 5M14 9l-5 5" stroke="#303030" stroke-width="2.2"/></svg>
<svg style="left:1505px;top:790px" width="16" height="16" viewBox="0 0 16 16"><rect x="3.5" y="0.5" width="11" height="14" fill="#e4eefa" stroke="#a0a890"/><rect x="11" y="1" width="3" height="13" fill="#c8d8f0"/><rect x="11.5" y="2" width="2" height="2" fill="#2050a0"/><rect x="11.5" y="11" width="2" height="2" fill="#2050a0"/><path d="M2 9v-2a2.5 2.5 0 0 1 5 0v2" stroke="#b08010" stroke-width="1.2" fill="none"/><rect x="0.5" y="8.5" width="8" height="6" fill="#f8d850" stroke="#b08010"/></svg>
<div class="a" style="left:1527px;top:788px;width:2px;height:18px;border-left:1px solid #808080;border-right:1px solid #fff"></div>
<svg style="left:1538px;top:791px" width="15" height="14" viewBox="0 0 15 14"><rect x="0.5" y="3.5" width="11" height="9" fill="#eef6fc" stroke="#a0a8b8"/><rect x="1" y="4" width="10" height="2" fill="#5a90d8"/><path d="M6 9l5-5" stroke="#205020" stroke-width="1.2"/><path d="M9 2l3-2 3 3-2 3z" fill="#40a040" stroke="#207020"/></svg>
<svg style="left:1562px;top:790px" width="14" height="14" viewBox="0 0 14 14"><rect x="0.8" y="0.8" width="12.4" height="9.4" fill="#dce8f8" stroke="#3060b0" stroke-width="1.6"/><path d="M3 3.5h5M3 6.5h8" stroke="#203080"/><path d="M5 12h4M2 13h10" stroke="#3060b0" stroke-width="1.4"/></svg>
<svg style="left:1583px;top:796px" width="5" height="4" viewBox="0 0 5 4"><path d="M0 0h5l-2.5 3z" fill="#000"/></svg>
<svg style="left:1596px;top:790px" width="16" height="16" viewBox="0 0 16 16"><rect x="0.5" y="2.5" width="13" height="12" fill="#eef6fc" stroke="#a08a50"/><rect x="1" y="3" width="12" height="2" fill="#5a90d8"/><path d="M12 1.5v13M8 14c3 0 4-3 4-6" stroke="#f0c040" fill="none"/><path d="M12 0v7M8.5 3.5h7" stroke="#c09020" stroke-width="1.4"/><path d="M12 1v5M9.5 3.5h5" stroke="#fff0a0" stroke-width="0.8"/></svg>
<svg style="left:1617px;top:796px" width="5" height="4" viewBox="0 0 5 4"><path d="M0 0h5l-2.5 3z" fill="#000"/></svg>
<svg style="left:1632px;top:795px" width="10" height="6" viewBox="0 0 10 6"><path d="M0 0h10l-5 5z" fill="#888888"/></svg>
<svg style="left:1656px;top:794px" width="9" height="9" viewBox="0 0 9 9"><path d="M1 1l7 7M8 1l-7 7" stroke="#0a1a0a" stroke-width="1.6"/></svg>
<svg style="left:22px;top:1032px" width="15" height="15" viewBox="0 0 15 15"><rect x="0.5" y="1.5" width="5" height="12" fill="#eef6fc" stroke="#a0a090"/><rect x="1" y="2" width="4" height="2" fill="#5a90d8"/><path d="M10 0v7M6.5 3.5h7" stroke="#c09020" stroke-width="1.4"/></svg>
<svg style="left:563px;top:212px" width="11" height="10" viewBox="0 0 11 10"><rect x="0" y="0" width="11" height="9" fill="#000"/><rect x="0" y="0" width="11" height="1.5" fill="#4a8ae0"/><path d="M3.5 3.5h-2v3h2" stroke="#fff" fill="none" stroke-width="1"/><rect x="4.5" y="4" width="1" height="1" fill="#fff"/><rect x="4.5" y="6" width="1" height="1" fill="#fff"/><path d="M6.5 3.5l3 3.5" stroke="#fff" stroke-width="1"/></svg>
<div class="a" style="left:1175px;top:212px;width:12px;height:10px;background:#d4d0c8;border-top:1px solid #fff;border-left:1px solid #fff;border-right:1px solid #404040;border-bottom:1px solid #404040"></div>
<div class="a" style="left:1187px;top:212px;width:12px;height:10px;background:#d4d0c8;border-top:1px solid #fff;border-left:1px solid #fff;border-right:1px solid #404040;border-bottom:1px solid #404040"></div>
<div class="a" style="left:1201px;top:212px;width:12px;height:10px;background:#d4d0c8;border-top:1px solid #fff;border-left:1px solid #fff;border-right:1px solid #404040;border-bottom:1px solid #404040"></div>
<svg style="left:1178px;top:217px" width="6" height="3" viewBox="0 0 6 3"><rect x="0" y="0" width="5" height="2" fill="#000"/></svg>
<svg style="left:1190px;top:214px" width="8" height="7" viewBox="0 0 8 7"><rect x="0.5" y="0.5" width="6" height="5" fill="none" stroke="#000"/><rect x="0" y="0" width="7" height="2" fill="#000"/></svg>
<svg style="left:1204px;top:214px" width="8" height="8" viewBox="0 0 8 8"><path d="M0.5 0.5l6 6M6.5 0.5l-6 6" stroke="#000" stroke-width="1.3"/></svg>
<svg style="left:1231px;top:417px" width="5" height="3" viewBox="0 0 5 3"><path d="M0 2.5h4l-2-2.5z" fill="#808080"/></svg>
<svg style="left:1231px;top:762px" width="5" height="3" viewBox="0 0 5 3"><path d="M0 0h4l-2 2.5z" fill="#808080"/></svg>
<svg style="left:37px;top:771px" width="3" height="5" viewBox="0 0 3 5"><path d="M2.5 0v4l-2.5-2z" fill="#808080"/></svg>
<svg style="left:1222px;top:771px" width="3" height="5" viewBox="0 0 3 5"><path d="M0 0v4l2.5-2z" fill="#808080"/></svg>
<svg style="left:1652px;top:418px" width="5" height="3" viewBox="0 0 5 3"><path d="M0 2.5h4l-2-2.5z" fill="#808080"/></svg>
<svg style="left:1652px;top:762px" width="5" height="3" viewBox="0 0 5 3"><path d="M0 0h4l-2 2.5z" fill="#808080"/></svg>
<svg style="left:1275px;top:771px" width="3" height="5" viewBox="0 0 3 5"><path d="M2.5 0v4l-2.5-2z" fill="#808080"/></svg>
<svg style="left:1643px;top:771px" width="3" height="5" viewBox="0 0 3 5"><path d="M0 0v4l2.5-2z" fill="#808080"/></svg>
<svg style="left:1665px;top:813px" width="5" height="3" viewBox="0 0 5 3"><path d="M0 2.5h4l-2-2.5z" fill="#000"/></svg>
<svg style="left:1665px;top:987px" width="5" height="3" viewBox="0 0 5 3"><path d="M0 0h4l-2 2.5z" fill="#000"/></svg>
<svg style="left:10px;top:996px" width="3" height="5" viewBox="0 0 3 5"><path d="M2.5 0v4l-2.5-2z" fill="#000"/></svg>
<svg style="left:1656px;top:996px" width="3" height="5" viewBox="0 0 3 5"><path d="M0 0v4l2.5-2z" fill="#000"/></svg>
<svg style="left:1206px;top:231px" width="5" height="3" viewBox="0 0 5 3"><path d="M0 2.5h4l-2-2.5z" fill="#000"/></svg>
<svg style="left:1206px;top:521px" width="5" height="3" viewBox="0 0 5 3"><path d="M0 0h4l-2 2.5z" fill="#000"/></svg>
</body></html>
